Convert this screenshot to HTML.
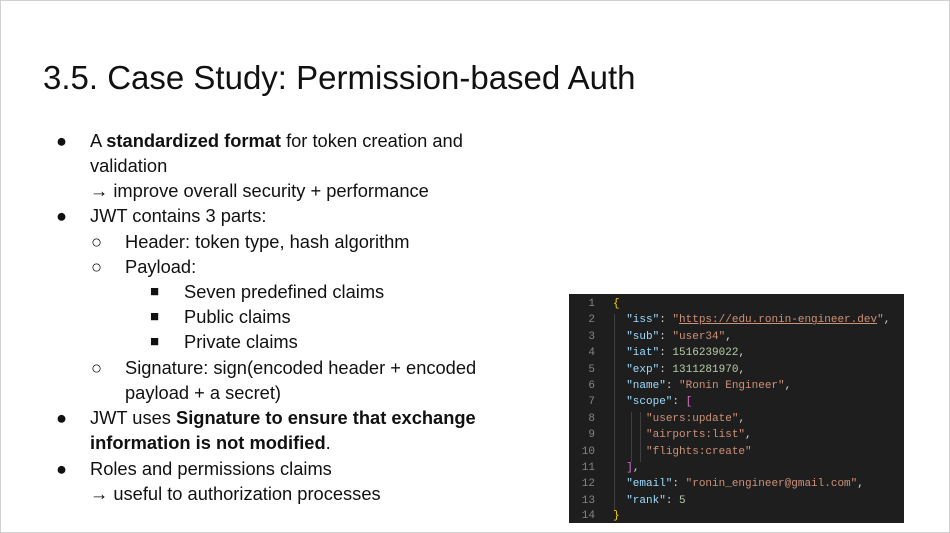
<html><head><style>
body{margin:0;width:950px;height:533px;background:#fff;overflow:hidden;position:relative;font-family:"Liberation Sans",Arial,sans-serif;color:#111}
.frame{position:absolute;left:0;top:0;width:948px;height:531px;border:1px solid #d0d0d0}
h1{position:absolute;left:43px;top:58px;margin:0;font-weight:normal;font-size:33px;line-height:40px}
.l{position:absolute;font-size:18.3px;line-height:25px;white-space:nowrap}
.code{position:absolute;left:569px;top:294px;width:335px;height:229px;background:#1e1e1e;font-family:"Liberation Mono","DejaVu Sans Mono",monospace;font-size:11px;color:#9cdcfe}
.row{position:absolute;left:0;height:16px;line-height:16px;white-space:pre}
.n{display:inline-block;width:26px;text-align:right;color:#858585;margin-right:18px}
.s{color:#ce9178}.k{color:#9cdcfe}.d{color:#b5cea8}.p{color:#d4d4d4}.b{color:#ffd700}.m{color:#da70d6}
.guide{position:absolute;width:1px;background:#404040}
</style></head><body>
<div class="frame"></div>
<h1>3.5. Case Study: Permission-based Auth</h1>
<div class="l" style="left:56px;top:128px">●</div><div class="l" style="left:90px;top:128px">A <b>standardized format</b> for token creation and</div>
<div class="l" style="left:90px;top:153px">validation</div>
<div class="l" style="left:90px;top:178px">→ improve overall security + performance</div>
<div class="l" style="left:56px;top:203px">●</div><div class="l" style="left:90px;top:203px">JWT contains 3 parts:</div>
<div class="l" style="left:91px;top:229px">○</div><div class="l" style="left:125px;top:229px">Header: token type, hash algorithm</div>
<div class="l" style="left:91px;top:254px">○</div><div class="l" style="left:125px;top:254px">Payload:</div>
<div class="l" style="left:150px;top:279px;font-size:15px">■</div><div class="l" style="left:184px;top:279px">Seven predefined claims</div>
<div class="l" style="left:150px;top:304px;font-size:15px">■</div><div class="l" style="left:184px;top:304px">Public claims</div>
<div class="l" style="left:150px;top:329px;font-size:15px">■</div><div class="l" style="left:184px;top:329px">Private claims</div>
<div class="l" style="left:91px;top:355px">○</div><div class="l" style="left:125px;top:355px">Signature: sign(encoded header + encoded</div>
<div class="l" style="left:125px;top:380px">payload + a secret)</div>
<div class="l" style="left:56px;top:405px">●</div><div class="l" style="left:90px;top:405px">JWT uses <b>Signature to ensure that exchange</b></div>
<div class="l" style="left:90px;top:430px"><b>information is not modified</b>.</div>
<div class="l" style="left:56px;top:456px">●</div><div class="l" style="left:90px;top:456px">Roles and permissions claims</div>
<div class="l" style="left:90px;top:481px">→ useful to authorization processes</div>
<div class="code">
<div class="guide" style="left:45px;top:20px;height:196px"></div>
<div class="guide" style="left:62px;top:118px;height:50px"></div>
<div class="guide" style="left:71px;top:118px;height:50px"></div>
<div class="row" style="top:2px"><span class="n">1</span><span class="b">{</span></div>
<div class="row" style="top:18.4px"><span class="n">2</span>  <span class="k">"iss"</span><span class="p">: </span><span class="s">"<u>https://edu.ronin-engineer.dev</u>"</span><span class="p">,</span></div>
<div class="row" style="top:34.8px"><span class="n">3</span>  <span class="k">"sub"</span><span class="p">: </span><span class="s">"user34"</span><span class="p">,</span></div>
<div class="row" style="top:51.2px"><span class="n">4</span>  <span class="k">"iat"</span><span class="p">: </span><span class="d">1516239022</span><span class="p">,</span></div>
<div class="row" style="top:67.6px"><span class="n">5</span>  <span class="k">"exp"</span><span class="p">: </span><span class="d">1311281970</span><span class="p">,</span></div>
<div class="row" style="top:84px"><span class="n">6</span>  <span class="k">"name"</span><span class="p">: </span><span class="s">"Ronin Engineer"</span><span class="p">,</span></div>
<div class="row" style="top:100.4px"><span class="n">7</span>  <span class="k">"scope"</span><span class="p">: </span><span class="m">[</span></div>
<div class="row" style="top:116.8px"><span class="n">8</span>     <span class="s">"users:update"</span><span class="p">,</span></div>
<div class="row" style="top:133.2px"><span class="n">9</span>     <span class="s">"airports:list"</span><span class="p">,</span></div>
<div class="row" style="top:149.6px"><span class="n">10</span>     <span class="s">"flights:create"</span></div>
<div class="row" style="top:166px"><span class="n">11</span>  <span class="m">]</span><span class="p">,</span></div>
<div class="row" style="top:182.4px"><span class="n">12</span>  <span class="k">"email"</span><span class="p">: </span><span class="s">"ronin_engineer@gmail.com"</span><span class="p">,</span></div>
<div class="row" style="top:198.8px"><span class="n">13</span>  <span class="k">"rank"</span><span class="p">: </span><span class="d">5</span></div>
<div class="row" style="top:213.5px"><span class="n">14</span><span class="b">}</span></div>
</div>
</body></html>
